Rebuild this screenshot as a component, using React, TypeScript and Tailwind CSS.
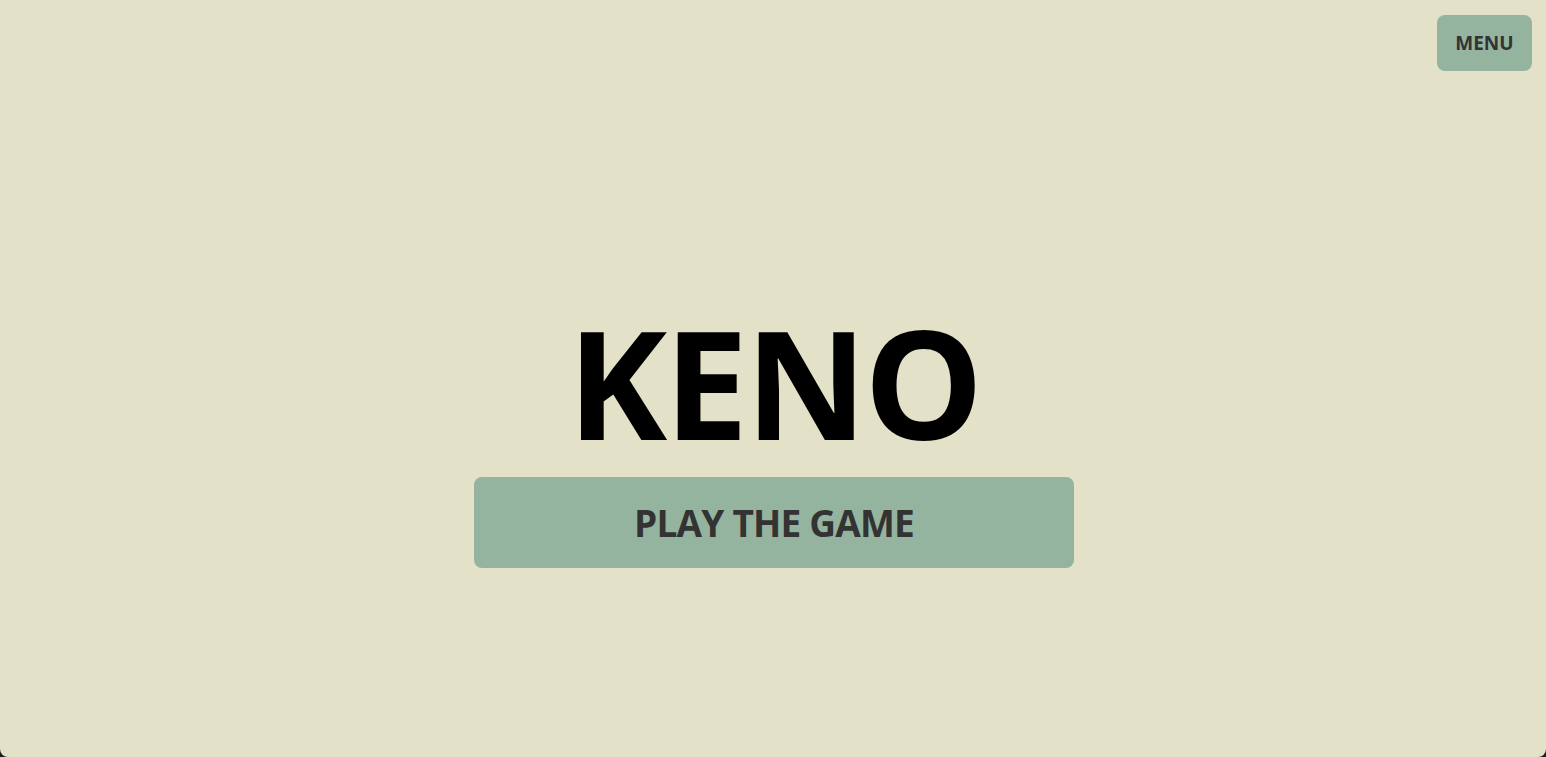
export default function App() {
  return (
    <div className="h-screen w-full bg-[#1e1e1e]" style={{ fontFamily: '"Open Sans", "Noto Sans", sans-serif' }}>
      <div className="relative h-full w-full rounded-b-[8px] bg-[#e3e2c9]">
        <button className="absolute right-[14px] top-[15px] flex h-[56px] w-[95px] items-center justify-center rounded-[8px] bg-[#95b4a0] text-[19px] font-bold text-[#333333]">
          MENU
        </button>
        <div className="flex flex-col items-center pt-[307px] pl-[2px]">
          <h1 className="text-[150px] font-bold leading-none tracking-[-3px] text-black">KENO</h1>
          <button className="mt-[20px] flex h-[91px] w-[600px] items-center justify-center rounded-[8px] bg-[#95b4a0] text-[37px] font-bold tracking-[-0.8px] text-[#333333]">
            PLAY THE GAME
          </button>
        </div>
      </div>
    </div>
  );
}
